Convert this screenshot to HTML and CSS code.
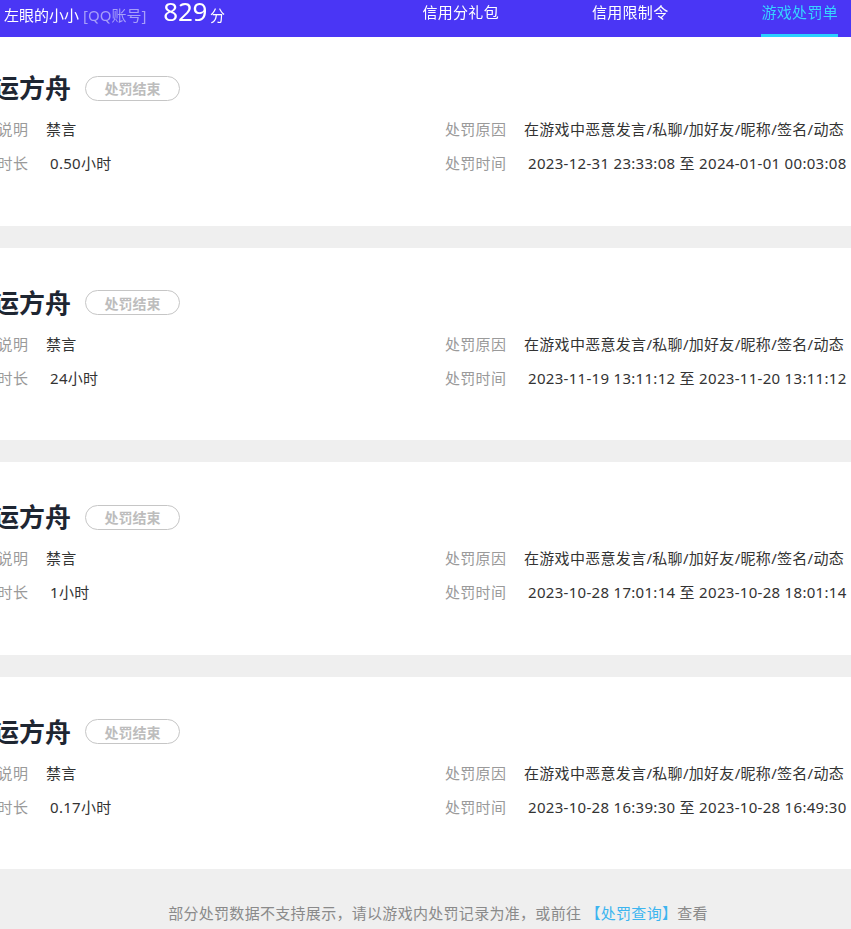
FILE: index.html
```html
<!DOCTYPE html>
<html lang="zh-CN">
<head>
<meta charset="utf-8">
<title>游戏处罚单</title>
<link rel="stylesheet" href="styles.css">
</head>
<body>
<header class="topbar">
  <div class="user">
    <span class="name">左眼的小小</span>
    <span class="acct">[QQ账号]</span>
    <span class="score">829</span>
    <span class="unit">分</span>
  </div>
  <nav class="tabs">
    <a class="tab">信用分礼包</a>
    <a class="tab">信用限制令</a>
    <a class="tab active">游戏处罚单</a>
  </nav>
</header>

<main class="list">
  <section class="card">
    <div class="inner">
      <div class="title-row"><h2 class="game">命运方舟</h2><span class="badge">处罚结束</span></div>
      <div class="rows">
        <div class="cell"><span class="label">处罚说明</span><span class="value">禁言</span></div>
        <div class="cell"><span class="label">处罚原因</span><span class="value">在游戏中恶意发言/私聊/加好友/昵称/签名/动态</span></div>
        <div class="cell"><span class="label">处罚时长</span><span class="value pad">0.50小时</span></div>
        <div class="cell"><span class="label">处罚时间</span><span class="value pad">2023-12-31 23:33:08 至 2024-01-01 00:03:08</span></div>
      </div>
    </div>
  </section>
  <section class="card">
    <div class="inner">
      <div class="title-row"><h2 class="game">命运方舟</h2><span class="badge">处罚结束</span></div>
      <div class="rows">
        <div class="cell"><span class="label">处罚说明</span><span class="value">禁言</span></div>
        <div class="cell"><span class="label">处罚原因</span><span class="value">在游戏中恶意发言/私聊/加好友/昵称/签名/动态</span></div>
        <div class="cell"><span class="label">处罚时长</span><span class="value pad">24小时</span></div>
        <div class="cell"><span class="label">处罚时间</span><span class="value pad">2023-11-19 13:11:12 至 2023-11-20 13:11:12</span></div>
      </div>
    </div>
  </section>
  <section class="card">
    <div class="inner">
      <div class="title-row"><h2 class="game">命运方舟</h2><span class="badge">处罚结束</span></div>
      <div class="rows">
        <div class="cell"><span class="label">处罚说明</span><span class="value">禁言</span></div>
        <div class="cell"><span class="label">处罚原因</span><span class="value">在游戏中恶意发言/私聊/加好友/昵称/签名/动态</span></div>
        <div class="cell"><span class="label">处罚时长</span><span class="value pad">1小时</span></div>
        <div class="cell"><span class="label">处罚时间</span><span class="value pad">2023-10-28 17:01:14 至 2023-10-28 18:01:14</span></div>
      </div>
    </div>
  </section>
  <section class="card">
    <div class="inner">
      <div class="title-row"><h2 class="game">命运方舟</h2><span class="badge">处罚结束</span></div>
      <div class="rows">
        <div class="cell"><span class="label">处罚说明</span><span class="value">禁言</span></div>
        <div class="cell"><span class="label">处罚原因</span><span class="value">在游戏中恶意发言/私聊/加好友/昵称/签名/动态</span></div>
        <div class="cell"><span class="label">处罚时长</span><span class="value pad">0.17小时</span></div>
        <div class="cell"><span class="label">处罚时间</span><span class="value pad">2023-10-28 16:39:30 至 2023-10-28 16:49:30</span></div>
      </div>
    </div>
  </section>
</main>

<footer class="note">
  部分处罚数据不支持展示，请以游戏内处罚记录为准，或前往 <a class="link">【处罚查询】</a>查看
</footer>
</body>
</html>
```

FILE: styles.css
```css
* { box-sizing: border-box; }

html, body {
  margin: 0;
  padding: 0;
}

body {
  background: #efefef;
  font-family: "Noto Sans", "Noto Sans CJK SC", sans-serif;
  letter-spacing: 0.3px;
  color: #333;
  overflow: hidden;
}

.topbar {
  position: fixed;
  top: 0;
  left: 0;
  right: 0;
  height: 37px;
  background: #4a36f5;
  display: flex;
  align-items: flex-start;
  justify-content: space-between;
  padding: 0 13px 0 4px;
  z-index: 2;
}

.user {
  display: flex;
  align-items: baseline;
  height: 24px;
  line-height: 24px;
  white-space: nowrap;
}

.name {
  color: #fff;
  font-size: 15px;
  letter-spacing: 0;
}

.acct {
  color: #a79ff9;
  font-size: 15px;
  margin-left: 4px;
  letter-spacing: 0;
}

.score {
  color: #fff;
  font-size: 26px;
  margin-left: 17px;
  line-height: 22px;
  letter-spacing: -0.3px;
}

.unit {
  color: #fff;
  font-size: 15px;
  margin-left: 3px;
}

.tabs {
  display: flex;
  gap: 93px;
}

.tab {
  display: block;
  height: 37px;
  line-height: 24px;
  color: #fff;
  font-size: 15px;
  border-bottom: 3px solid transparent;
  white-space: nowrap;
}

.tab.active {
  color: #36d3ff;
  border-bottom-color: #2bd0ff;
}

.list {
  padding-top: 33px;
}

.card {
  background: #fff;
  margin-bottom: 22px;
  padding: 39px 0 45px;
  height: 192.5px;
}

.card:last-child {
  margin-bottom: 0;
}

.inner {
  margin-left: -33px;
}

.title-row {
  display: flex;
  align-items: center;
  gap: 14px;
  height: 32px;
}

.game {
  margin: 0;
  font-size: 26px;
  line-height: 32px;
  font-weight: bold;
  color: #1e2632;
  white-space: nowrap;
  letter-spacing: 0;
}

.badge {
  display: flex;
  align-items: center;
  justify-content: center;
  width: 95px;
  height: 25px;
  border: 1px solid #c6c6c6;
  border-radius: 13px;
  color: #bdbdbd;
  font-size: 14px;
  font-weight: bold;
  letter-spacing: 0;
}

.rows {
  display: grid;
  grid-template-columns: 478px 1fr;
  margin-top: 8px;
}

.cell {
  display: flex;
  height: 34px;
  line-height: 34px;
  font-size: 15px;
  white-space: nowrap;
}

.label {
  color: #9a9a9a;
  width: 61px;
  margin-right: 18px;
}

.value {
  color: #333;
}

.value.pad {
  padding-left: 4px;
}

.note {
  padding: 34px 0 0 25px;
  text-align: center;
  font-size: 15px;
  line-height: 20px;
  color: #8a8a8a;
  height: 60px;
}

.link {
  color: #3db5ef;
}
```
